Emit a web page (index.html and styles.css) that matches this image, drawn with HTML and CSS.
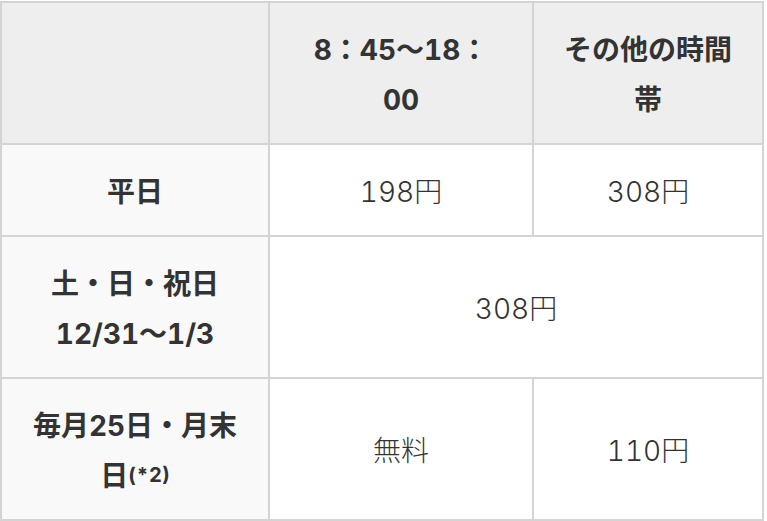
FILE: index.html
```html
<!DOCTYPE html>
<html lang="ja">
<head>
<meta charset="utf-8">
<title>料金表</title>
<link rel="stylesheet" href="styles.css">
</head>
<body>
<table class="fee-table">
  <colgroup>
    <col class="col-label">
    <col class="col-day">
    <col class="col-other">
  </colgroup>
  <thead>
    <tr>
      <th class="corner"></th>
      <th>8：45〜18：00</th>
      <th>その他の時間帯</th>
    </tr>
  </thead>
  <tbody>
    <tr class="row-short">
      <th class="label">平日</th>
      <td>198円</td>
      <td>308円</td>
    </tr>
    <tr>
      <th class="label">土・日・祝日<br>12/31〜1/3</th>
      <td colspan="2">308円</td>
    </tr>
    <tr>
      <th class="label">毎月25日・月末日<sup class="note">(*2)</sup></th>
      <td>無料</td>
      <td>110円</td>
    </tr>
  </tbody>
</table>
</body>
</html>
```

FILE: styles.css
```css
html, body {
  margin: 0;
  padding: 0;
  background: #ffffff;
}

body {
  padding-top: 1px;
  font-family: Inter, "Noto Sans CJK JP", sans-serif;
  font-variant-numeric: tabular-nums;
  color: #333333;
}

.fee-table {
  width: 764px;
  table-layout: fixed;
  border-collapse: separate;
  border-spacing: 0;
  border-left: 2px solid #d4d4d4;
  border-top: 2px solid #d4d4d4;
}

.col-label { width: 268px; }
.col-day { width: 264px; }
.col-other { width: 230px; }

.fee-table th,
.fee-table td {
  border-right: 2px solid #d4d4d4;
  border-bottom: 2px solid #d4d4d4;
  padding: 22px 29px 18px;
  font-size: 28px;
  line-height: 50px;
  text-align: center;
  vertical-align: middle;
}

.fee-table thead th {
  background: #eeeeee;
  font-weight: 700;
}

.fee-table th.label {
  background: #f9f9f9;
  font-weight: 700;
}

.fee-table td {
  background: #ffffff;
  font-weight: 300;
}

.note {
  font-size: 20px;
  line-height: 0;
  vertical-align: 4px;
}
```
